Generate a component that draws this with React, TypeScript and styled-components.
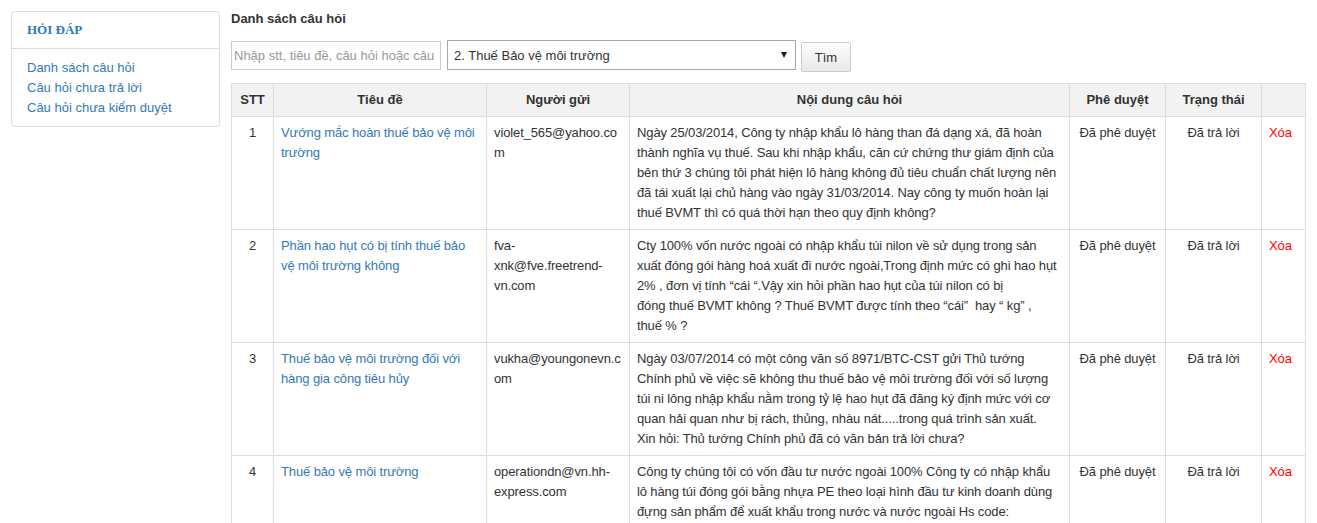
import React from "react";
import styled, { createGlobalStyle } from "styled-components";

const GlobalStyle = createGlobalStyle`
  html, body { margin: 0; padding: 0; background: #fff; }
  body {
    font-family: "Liberation Sans", Arial, Helvetica, sans-serif;
    font-size: 13px;
    line-height: 20px;
    color: #333;
  }
  * { box-sizing: border-box; }
`;

const Page = styled.div`
  display: flex;
  align-items: flex-start;
  gap: 11px;
  padding: 11px;
`;

const SidePanel = styled.aside`
  flex: 0 0 209px;
  border: 1px solid #ddd;
  border-radius: 4px;
  background: #fff;
`;

const SideHeading = styled.div`
  padding: 8px 15px 8px;
  height: 37px;
  border-bottom: 1px solid #ddd;
  font-family: "Liberation Serif", "Times New Roman", serif;
  font-weight: bold;
  font-size: 13px;
  line-height: 20px;
  color: #2a7bbf;
`;

const SideList = styled.ul`
  list-style: none;
  margin: 0;
  padding: 9px 15px 9px;
`;

const SideItem = styled.li`
  line-height: 20px;
  &:last-child { line-height: 19px; }
`;

const Link = styled.a`
  color: #337ab7;
  text-decoration: none;
`;

const Main = styled.main`
  flex: 1 1 auto;
  min-width: 0;
`;

const Title = styled.h2`
  margin: 0;
  font-size: 13px;
  line-height: 16px;
  font-weight: bold;
  color: #333;
`;

const Toolbar = styled.div`
  display: flex;
  align-items: flex-start;
  margin-top: 13px;
  height: 32px;
`;

const SearchInput = styled.input`
  width: 210px;
  height: 29px;
  margin-top: 1px;
  padding: 0 2px;
  border: 1px solid #ccc;
  font: 13px "Liberation Sans", Arial, sans-serif;
  color: #333;
  outline: none;
  &::placeholder { color: #999; }
`;

const SelectWrap = styled.div`
  position: relative;
  margin-left: 6px;
  width: 349px;
  height: 30px;
`;

const Select = styled.select`
  appearance: none;
  -webkit-appearance: none;
  width: 100%;
  height: 30px;
  padding: 0 24px 0 6px;
  border: 1px solid #a9a9a9;
  border-radius: 0;
  background: #fff;
  font: 13px "Liberation Sans", Arial, sans-serif;
  color: #333;
  outline: none;
`;

const SelectArrow = styled.span`
  position: absolute;
  right: 9px;
  top: 12px;
  width: 0;
  height: 0;
  border-left: 3px solid transparent;
  border-right: 3px solid transparent;
  border-top: 6px solid #222;
  pointer-events: none;
`;

const Button = styled.button`
  margin-left: 5px;
  margin-top: 2px;
  width: 50px;
  height: 30px;
  border: 1px solid #ccc;
  border-radius: 2px;
  background: linear-gradient(#fdfdfd, #e8e8e8);
  font: 13px "Liberation Sans", Arial, sans-serif;
  color: #333;
  padding: 0;
`;

const Table = styled.table`
  margin-top: 11px;
  width: 100%;
  border-collapse: collapse;
  table-layout: fixed;
`;

const Th = styled.th`
  background: #f2f2f2;
  border: 1px solid #ddd;
  padding: 6px 7px;
  font-weight: bold;
  text-align: center;
  line-height: 20px;
`;

const Td = styled.td<{ $align?: string; $tight?: boolean }>`
  border: 1px solid #ddd;
  padding: ${(p) => (p.$tight ? "6px 3px 6px 7px" : "6px 7px")};
  vertical-align: top;
  line-height: 20px;
  letter-spacing: -0.12px;
  text-align: ${(p) => p.$align || "left"};
  overflow-wrap: break-word;
  word-wrap: break-word;
`;

const Line = styled.span`
  display: block;
`;

const DeleteLink = styled.a`
  color: #f00;
  text-decoration: none;
`;

type Row = {
  stt: number;
  title: string;
  sender: string;
  lines: string[];
};

const rows: Row[] = [
  {
    stt: 1,
    title: "Vướng mắc hoàn thuế bảo vệ môi trường",
    sender: "violet_565@yahoo.com",
    lines: [
      "Ngày 25/03/2014, Công ty nhập khẩu lô hàng than đá dạng xá, đã hoàn",
      "thành nghĩa vụ thuế. Sau khi nhập khẩu, căn cứ chứng thư giám định của",
      "bên thứ 3 chúng tôi phát hiện lô hàng không đủ tiêu chuẩn chất lượng nên",
      "đã tái xuất lại chủ hàng vào ngày 31/03/2014. Nay công ty muốn hoàn lại",
      "thuế BVMT thì có quá thời hạn theo quy định không?",
    ],
  },
  {
    stt: 2,
    title: "Phần hao hụt có bị tính thuế bảo vệ môi trường không",
    sender: "fva-xnk@fve.freetrend-vn.com",
    lines: [
      "Cty 100% vốn nước ngoài có nhập khẩu túi nilon về sử dụng trong sản",
      "xuất đóng gói hàng hoá xuất đi nước ngoài,Trong định mức có ghi hao hụt",
      "2% , đơn vị tính “cái “.Vậy xin hỏi phần hao hụt của túi nilon có bị",
      "đóng thuế BVMT không ? Thuế BVMT được tính theo “cái”\u00a0 hay “ kg” ,",
      "thuế % ?",
    ],
  },
  {
    stt: 3,
    title: "Thuế bảo vệ môi trường đối với hàng gia công tiêu hủy",
    sender: "vukha@youngonevn.com",
    lines: [
      "Ngày 03/07/2014 có một công văn số 8971/BTC-CST gửi Thủ tướng",
      "Chính phủ về việc sẽ không thu thuế bảo vệ môi trường đối với số lượng",
      "túi ni lông nhập khẩu nằm trong tỷ lệ hao hụt đã đăng ký định mức với cơ",
      "quan hải quan như bị rách, thủng, nhàu nát.....trong quá trình sản xuất.",
      "Xin hỏi: Thủ tướng Chính phủ đã có văn bản trả lời chưa?",
    ],
  },
  {
    stt: 4,
    title: "Thuế bảo vệ môi trường",
    sender: "operationdn@vn.hh-express.com",
    lines: [
      "Công ty chúng tôi có vốn đầu tư nước ngoài 100% Công ty có nhập khẩu",
      "lô hàng túi đóng gói bằng nhựa PE theo loại hình đầu tư kinh doanh dùng",
      "đựng sản phẩm để xuất khẩu trong nước và nước ngoài Hs code:",
      "3923.21.99 thì có phải chịu thuế bảo vệ môi trường không?",
    ],
  },
];

export default function App() {
  return (
    <>
      <GlobalStyle />
      <Page>
        <SidePanel>
          <SideHeading>HỎI ĐÁP</SideHeading>
          <SideList>
            <SideItem><Link href="#">Danh sách câu hỏi</Link></SideItem>
            <SideItem><Link href="#">Câu hỏi chưa trả lời</Link></SideItem>
            <SideItem><Link href="#">Câu hỏi chưa kiểm duyệt</Link></SideItem>
          </SideList>
        </SidePanel>
        <Main>
          <Title>Danh sách câu hỏi</Title>
          <Toolbar>
            <SearchInput placeholder="Nhập stt, tiêu đề, câu hỏi hoặc câu trả lời" />
            <SelectWrap>
              <Select defaultValue="2">
                <option value="2">2. Thuế Bảo vệ môi trường</option>
              </Select>
              <SelectArrow />
            </SelectWrap>
            <Button type="button">Tìm</Button>
          </Toolbar>
          <Table>
            <colgroup>
              <col style={{ width: 42 }} />
              <col style={{ width: 213 }} />
              <col style={{ width: 143 }} />
              <col style={{ width: 440 }} />
              <col style={{ width: 96 }} />
              <col style={{ width: 96 }} />
              <col />
            </colgroup>
            <thead>
              <tr>
                <Th>STT</Th>
                <Th>Tiêu đề</Th>
                <Th>Người gửi</Th>
                <Th>Nội dung câu hỏi</Th>
                <Th>Phê duyệt</Th>
                <Th>Trạng thái</Th>
                <Th></Th>
              </tr>
            </thead>
            <tbody>
              {rows.map((r) => (
                <tr key={r.stt}>
                  <Td $align="center">{r.stt}</Td>
                  <Td><Link href="#">{r.title}</Link></Td>
                  <Td>{r.sender}</Td>
                  <Td $tight>
                    {r.lines.map((l, i) => (
                      <Line key={i}>{l}</Line>
                    ))}
                  </Td>
                  <Td $align="center">Đã phê duyệt</Td>
                  <Td $align="center">Đã trả lời</Td>
                  <Td><DeleteLink href="#">Xóa</DeleteLink></Td>
                </tr>
              ))}
            </tbody>
          </Table>
        </Main>
      </Page>
    </>
  );
}
